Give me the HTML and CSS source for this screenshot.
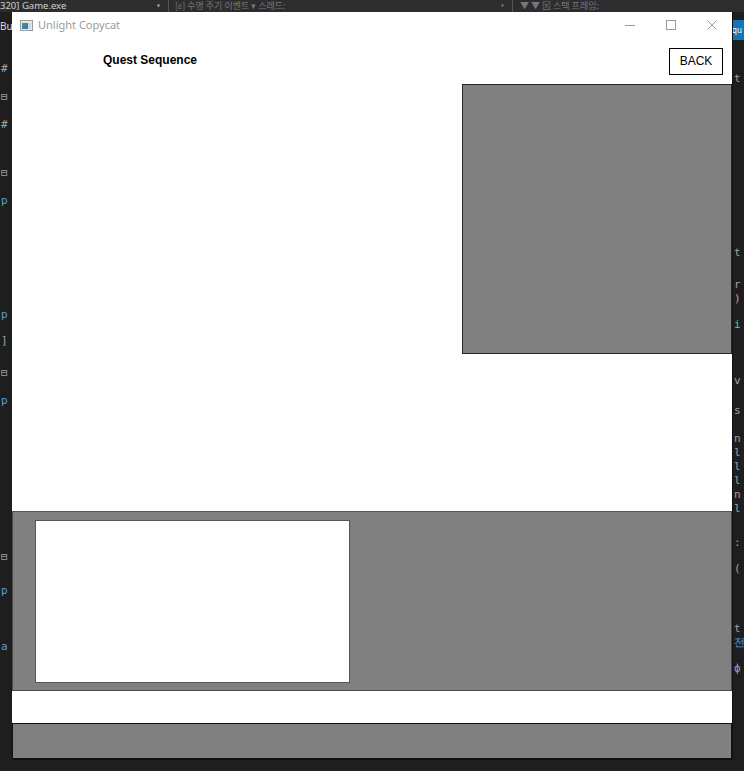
FILE: index.html
```html
<!DOCTYPE html>
<html>
<head>
<meta charset="utf-8">
<link rel="stylesheet" href="styles.css">
</head>
<body>
<div class="ide">
  <div class="ide-top">
    <span class="ide-proc">320] Game.exe</span>
    <span class="ide-drop">▾</span>
    <span class="ide-sep"></span>
    <span class="ide-ev">[ɛ] 수명 주기 이벤트 ▾ 스레드:</span>
    <span class="ide-drop2">▾</span>
    <span class="ide-sep2"></span>
    <span class="ide-ev2">▼ ▼ ⊠ 스택 프레임:</span>
  </div>
  <span class="ide-bu">Bu</span>
  <span class="ide-qu">qu</span>
  <div class="ide-left">
    <span style="top:62px">#</span>
    <span style="top:90px">⊟</span>
    <span style="top:118px">#</span>
    <span style="top:166px">⊟</span>
    <span class="kw" style="top:194px">p</span>
    <span class="kw" style="top:308px">p</span>
    <span style="top:334px">]</span>
    <span style="top:366px">⊟</span>
    <span class="kw" style="top:394px">p</span>
    <span style="top:550px">⊟</span>
    <span class="kw" style="top:584px">p</span>
    <span class="kw" style="top:640px">a</span>
  </div>
  <div class="ide-right">
    <span style="top:72px">t</span>
    <span style="top:246px">t</span>
    <span style="top:278px">r</span>
    <span class="or" style="top:292px">)</span>
    <span class="gr" style="top:318px">i</span>
    <span style="top:374px">v</span>
    <span style="top:404px">s</span>
    <span style="top:432px">n</span>
    <span style="top:446px">l</span>
    <span style="top:460px">l</span>
    <span style="top:474px">l</span>
    <span style="top:488px">n</span>
    <span style="top:502px">l</span>
    <span style="top:536px">:</span>
    <span style="top:562px">(</span>
    <span style="top:622px">t</span>
    <span class="kw" style="top:636px">전</span>
    <span style="top:662px">ф</span>
  </div>
</div>

<div class="window">
  <div class="titlebar">
    <svg class="app-icon" width="13" height="11" viewBox="0 0 13 11">
      <defs>
        <linearGradient id="g" x1="0" y1="0" x2="1" y2="1">
          <stop offset="0" stop-color="#3aa07a"/>
          <stop offset="1" stop-color="#3a6fc0"/>
        </linearGradient>
      </defs>
      <rect x="0.5" y="0.5" width="12" height="10" fill="#e8e8e8" stroke="#9a9a9a"/>
      <rect x="2" y="3" width="6" height="6" fill="url(#g)"/>
      <rect x="8" y="3" width="3" height="6" fill="#cfd8e0"/>
    </svg>
    <span class="title">Unlight Copycat</span>
    <div class="caption-buttons">
      <div class="cap-btn"><span class="min-line"></span></div>
      <div class="cap-btn"><span class="max-box"></span></div>
      <div class="cap-btn">
        <svg width="10" height="10" viewBox="0 0 10 10"><path d="M0.5 0.5 L9.5 9.5 M9.5 0.5 L0.5 9.5" stroke="#9a9a9a" stroke-width="1" fill="none"/></svg>
      </div>
    </div>
  </div>
  <div class="client">
    <div class="top-area">
      <div class="header">
        <span class="scene-title">Quest Sequence</span>
        <button class="back-btn">BACK</button>
      </div>
      <div class="preview-panel"></div>
    </div>
    <div class="bottom-panel">
      <div class="info-box"></div>
    </div>
    <div class="white-strip"></div>
    <div class="gray-strip"></div>
  </div>
</div>
</body>
</html>
```

FILE: styles.css
```css
html, body {
  margin: 0;
  padding: 0;
}
body {
  width: 744px;
  height: 771px;
  background: #1e1e1e;
  position: relative;
  overflow: hidden;
  font-family: "Liberation Sans", Arial, sans-serif;
}

/* IDE backdrop */
.ide {
  position: absolute;
  inset: 0;
  color: #c8c8c8;
  font-family: "DejaVu Sans Mono", monospace;
  font-size: 11px;
}
.ide-top {
  position: absolute;
  left: 0;
  top: 0;
  width: 744px;
  height: 12px;
  background: #2d2d30;
  overflow: hidden;
}
.ide-proc {
  position: absolute;
  left: 0;
  top: 0;
  font-family: "Noto Sans", sans-serif;
  font-size: 9.5px;
  line-height: 11px;
  color: #d0d0d0;
}
.ide-drop { position: absolute; left: 156px; top: 0; font-size: 8px; line-height: 11px; color: #aaa; }
.ide-drop2 { position: absolute; left: 500px; top: 0; font-size: 8px; line-height: 11px; color: #777; }
.ide-sep { position: absolute; left: 168px; top: 0; width: 1px; height: 12px; background: #555; }
.ide-sep2 { position: absolute; left: 512px; top: 0; width: 1px; height: 12px; background: #555; }
.ide-ev {
  position: absolute; left: 175px; top: 0;
  font-family: "Noto Sans CJK KR", sans-serif; font-size: 9px; line-height: 11px; color: #777;
}
.ide-ev2 {
  position: absolute; left: 520px; top: 0;
  font-family: "Noto Sans CJK KR", sans-serif; font-size: 9px; line-height: 11px; color: #777;
}
.ide-bu {
  position: absolute; left: 0; top: 19px;
  font-family: "Noto Sans", sans-serif; font-size: 10px; line-height: 14px; color: #ddd;
}
.ide-qu {
  position: absolute; left: 732px; top: 20px; width: 12px; height: 20px;
  background: #1177bb; color: #fff;
  font-family: "Noto Sans", sans-serif; font-size: 8px; line-height: 20px;
  overflow: hidden;
}
.ide-left span, .ide-right span {
  position: absolute;
  font-size: 11px;
  line-height: 14px;
  color: #a0a0a0;
}
.ide-left span { left: 1px; }
.ide-right span { left: 734px; }
.ide .kw { color: #569cd6; }
.ide .or { color: #d69d85; }
.ide .gr { color: #4ec9b0; }

/* Window */
.window {
  position: absolute;
  left: 12px;
  top: 12px;
  width: 720px;
  height: 747px;
  background: #ffffff;
  display: flex;
  flex-direction: column;
  box-shadow: 1px 1px 0 #111;
}
.titlebar {
  height: 31px;
  display: flex;
  align-items: flex-start;
  flex-shrink: 0;
}
.app-icon {
  margin-left: 8px;
  margin-top: 8px;
}
.title {
  margin-left: 5px;
  margin-top: 6px;
  font-family: "Noto Sans", sans-serif;
  font-size: 11px;
  line-height: 14px;
  color: #9a9a9a;
}
.caption-buttons {
  margin-left: auto;
  display: flex;
  height: 26px;
}
.cap-btn {
  width: 41px;
  height: 26px;
  display: flex;
  align-items: center;
  justify-content: center;
}
.min-line {
  width: 10px;
  height: 1px;
  background: #9a9a9a;
}
.max-box {
  width: 10px;
  height: 10px;
  border: 1px solid #9a9a9a;
  box-sizing: border-box;
}

.client {
  flex: 1;
  display: flex;
  flex-direction: column;
}
.top-area {
  height: 468px;
  display: flex;
  flex-direction: column;
  flex-shrink: 0;
}
.header {
  height: 41px;
  display: flex;
  justify-content: space-between;
  align-items: flex-start;
  flex-shrink: 0;
}
.scene-title {
  margin-left: 91px;
  margin-top: 10px;
  font-family: "Liberation Sans", Arial, sans-serif;
  font-weight: bold;
  font-size: 12px;
  line-height: 14px;
  color: #000;
}
.back-btn {
  margin-top: 5px;
  margin-right: 9px;
  width: 54px;
  height: 27px;
  padding: 0;
  border: 1px solid #000;
  background: #fff;
  font-family: "Liberation Sans", Arial, sans-serif;
  font-size: 12px;
  color: #000;
  line-height: 25px;
}
.preview-panel {
  align-self: flex-end;
  width: 270px;
  height: 270px;
  box-sizing: border-box;
  background: #808080;
  border: 1px solid #262626;
}
.bottom-panel {
  height: 180px;
  box-sizing: border-box;
  background: #808080;
  border: 1px solid #4a4a4a;
  border-top-color: #555;
  padding-left: 22px;
  padding-top: 8px;
  flex-shrink: 0;
}
.info-box {
  width: 315px;
  height: 163px;
  box-sizing: border-box;
  background: #fff;
  border: 1px solid #555;
}
.white-strip {
  height: 32px;
  background: #fff;
  flex-shrink: 0;
}
.gray-strip {
  height: 36px;
  box-sizing: border-box;
  background: #808080;
  border: 1px solid #111;
  flex-shrink: 0;
}
```
